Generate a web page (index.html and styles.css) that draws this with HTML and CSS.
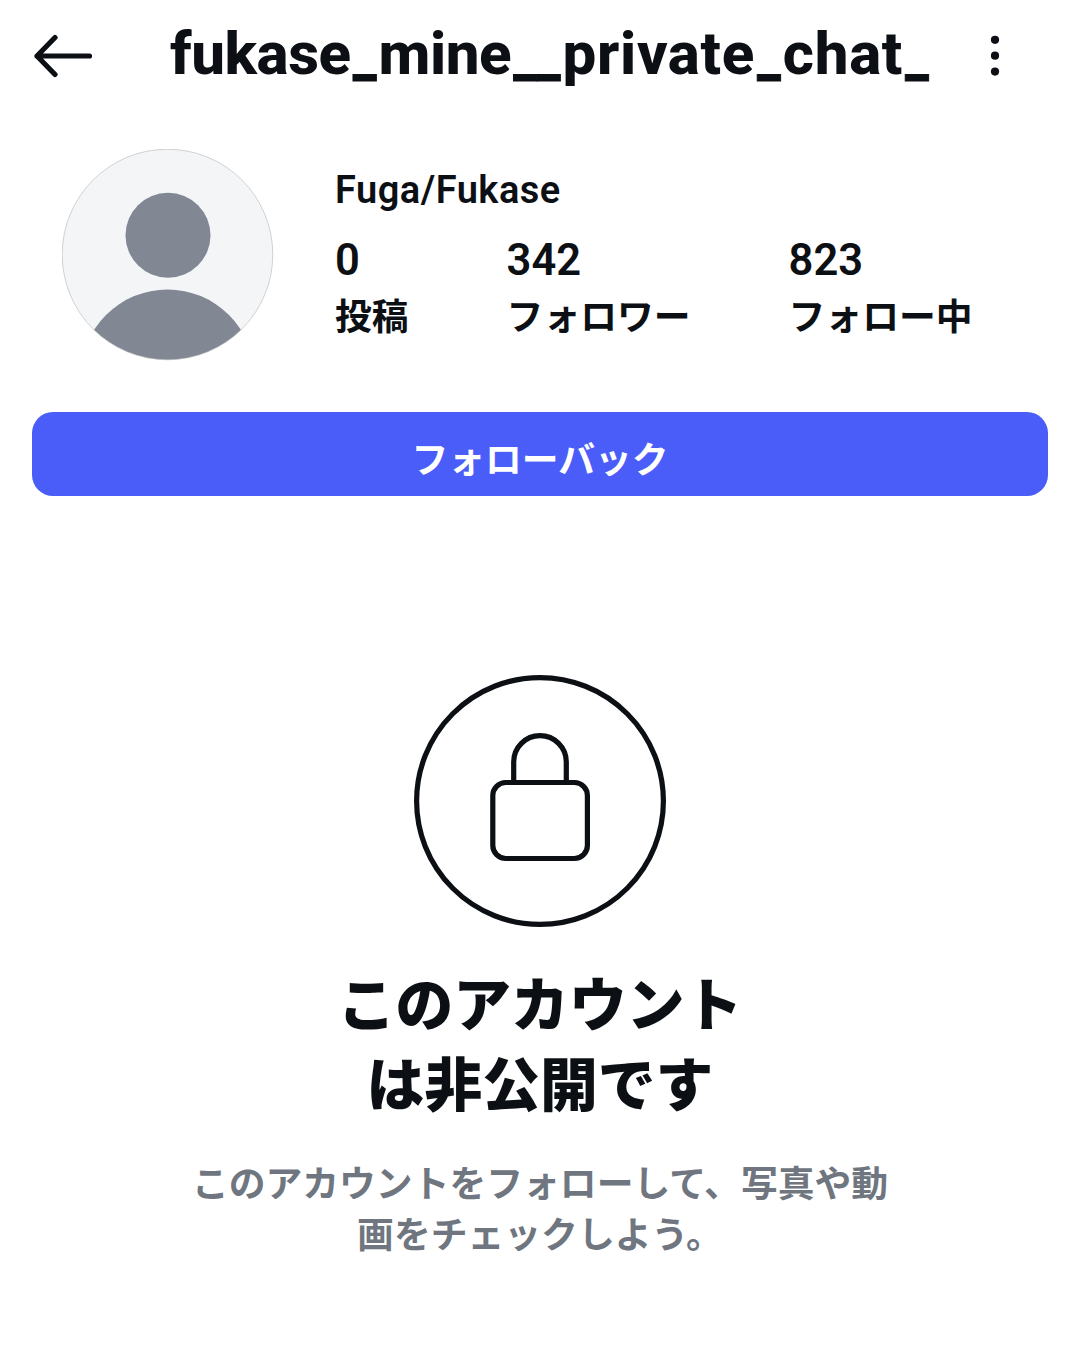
FILE: index.html
```
<!DOCTYPE html>
<html lang="ja">
<head>
    <meta charset="UTF-8">
    <title>fukase_mine__private_chat_</title>
    <link rel="stylesheet" href="styles.css">
</head>
<body>

<!-- Top bar -->
<header class="topbar">
    <svg class="back" viewBox="0 0 60 44" width="60" height="44">
        <path d="M22 3.5 L4 22 L22 40.5 M4 22 H56.5"/>
    </svg>
    <h1 class="username">fukase<i>_</i>mine<i>__</i><span class="wide">private</span><i>_</i><span class="wide">chat</span><i>_</i></h1>
    <svg class="more" viewBox="0 0 12 44" width="12" height="44">
        <circle cx="6" cy="5.8" r="4.1"/>
        <circle cx="6" cy="21.7" r="4.1"/>
        <circle cx="6" cy="37.6" r="4.1"/>
    </svg>
</header>

<!-- Profile -->
<section class="profile">
    <svg class="avatar" viewBox="0 0 212 212" width="212" height="212">
        <defs>
            <clipPath id="round"><circle cx="105.5" cy="105.5" r="105.3"/></clipPath>
        </defs>
        <g clip-path="url(#round)">
            <rect class="avatar-bg" width="212" height="212"/>
            <circle class="avatar-fg" cx="106" cy="86.2" r="42.5"/>
            <circle class="avatar-fg" cx="105.5" cy="227.5" r="87"/>
        </g>
        <circle class="avatar-ring" cx="105.5" cy="105.5" r="105.3"/>
    </svg>
    <div class="info">
        <div class="name">Fuga/Fukase</div>
        <div class="stats">
            <div class="stat"><b>0</b><span>投稿</span></div>
            <div class="stat"><b>342</b><span>フォロワー</span></div>
            <div class="stat"><b>823</b><span>フォロー中</span></div>
        </div>
    </div>
</section>

<button class="follow">フォローバック</button>

<!-- Private account notice -->
<section class="private">
    <svg class="lock" viewBox="0 0 252 252" width="252" height="252">
        <circle cx="126" cy="126" r="123.4"/>
        <path d="M99.7 107 V87 A26.3 26.3 0 0 1 152.3 87 V107"/>
        <rect x="78.8" y="107.5" width="94.6" height="76" rx="13"/>
    </svg>
    <h2>このアカウント<br>は非公開です</h2>
    <p>このアカウントをフォローして、写真や動<br>画をチェックしよう。</p>
</section>

</body>
</html>
```

FILE: styles.css
```
* {
  box-sizing: border-box;
}

body {
  margin: 0;
  background-color: #fff;
  color: #0c1014;
  font-family: Roboto, "Noto Sans CJK JP", sans-serif;
}

svg {
  display: block;
  flex: none;
}

/* Top bar */
.topbar {
  display: flex;
  align-items: center;
  height: 112px;
  padding-left: 33px;
}

.back {
  fill: none;
  stroke: #0c1014;
  stroke-width: 5.2;
  stroke-linecap: round;
  stroke-linejoin: round;
}

.username {
  width: 764px;
  margin: 0 0 2px 77px;
  font-size: 60px;
  line-height: 80px;
  font-weight: 800;
  letter-spacing: -0.4px;
  white-space: nowrap;
}

/* narrow, thick underscores */
.username i {
  margin: 0 2.2px;
  font-size: 53px;
  font-style: normal;
  font-weight: 900;
  letter-spacing: 0;
  -webkit-text-stroke: 1px #0c1014;
}

.username .wide {
  letter-spacing: 0.7px;
}

.more {
  margin-left: 55px;
  fill: #0c1014;
}

/* Profile */
.profile {
  display: flex;
  padding: 37px 0 0 62px;
  height: 300px;
}

.avatar-bg {
  fill: #f3f5f7;
}

.avatar-fg {
  fill: #828893;
}

.avatar-ring {
  fill: none;
  stroke: #b4b6b8;
  stroke-width: 0.6;
}

.info {
  padding: 18px 0 0 61px;
}

.name {
  font-size: 38px;
  line-height: 46px;
  font-weight: 600;
  letter-spacing: 0.5px;
}

.stats {
  display: flex;
  gap: 98px;
  margin-top: 21px;
}

.stat b {
  display: block;
  font-size: 43.5px;
  line-height: 54px;
  font-weight: 600;
}

.stat span {
  display: block;
  margin-top: 2px;
  font-size: 36.8px;
  line-height: 56px;
  font-weight: 600;
}

/* Follow button */
.follow {
  display: block;
  width: 1016px;
  height: 84px;
  margin: 0 auto;
  padding: 6px 0 0;
  border: 0;
  border-radius: 21px;
  background-color: #4a5df9;
  color: #fff;
  font-family: "Noto Sans CJK JP", sans-serif;
  font-size: 36.8px;
  font-weight: 700;
}

/* Private account notice */
.private {
  display: flex;
  flex-direction: column;
  align-items: center;
  padding-top: 179px;
  text-align: center;
}

.lock {
  fill: none;
  stroke: #0c1014;
  stroke-width: 5.2;
}

.private h2 {
  margin: 39px 0 0;
  font-size: 57.8px;
  line-height: 80px;
  font-weight: 900;
}

.private p {
  margin: 33px 0 0;
  color: #6f7680;
  font-size: 36.8px;
  line-height: 51px;
  font-weight: 600;
}
```
